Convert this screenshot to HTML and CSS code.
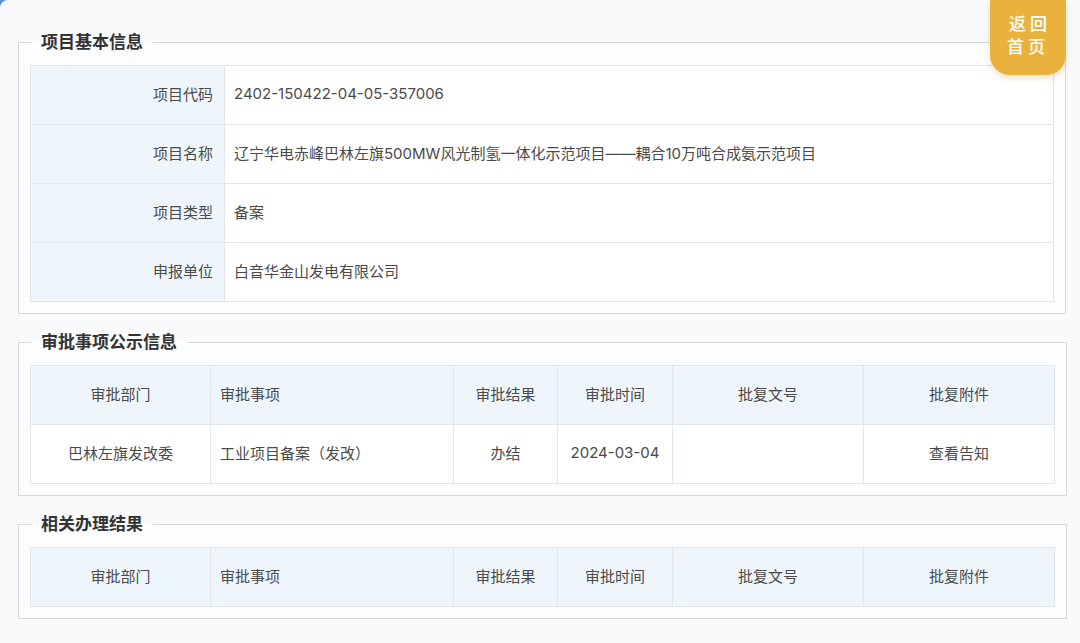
FILE: index.html
```html
<!DOCTYPE html>
<html lang="zh-CN">

<head>
    <meta charset="UTF-8" />
    <meta name="viewport" content="width=device-width, initial-scale=1.0" />
    <title>项目详情</title>
    <link rel="stylesheet" href="styles.css">
</head>

<body>
    <div class="page">

        <a class="back-home" href="#">返回<br>首页</a>

        <fieldset class="section">
            <legend>项目基本信息</legend>
            <table class="info-table">
                <tr>
                    <th>项目代码</th>
                    <td>2402-150422-04-05-357006</td>
                </tr>
                <tr>
                    <th>项目名称</th>
                    <td>辽宁华电赤峰巴林左旗500MW风光制氢一体化示范项目——耦合10万吨合成氨示范项目</td>
                </tr>
                <tr>
                    <th>项目类型</th>
                    <td>备案</td>
                </tr>
                <tr>
                    <th>申报单位</th>
                    <td>白音华金山发电有限公司</td>
                </tr>
            </table>
        </fieldset>

        <fieldset class="section">
            <legend>审批事项公示信息</legend>
            <table class="list-table">
                <colgroup>
                    <col class="c-dept"><col class="c-item"><col class="c-result">
                    <col class="c-time"><col class="c-doc"><col class="c-file">
                </colgroup>
                <tr>
                    <th>审批部门</th>
                    <th class="left">审批事项</th>
                    <th>审批结果</th>
                    <th>审批时间</th>
                    <th>批复文号</th>
                    <th>批复附件</th>
                </tr>
                <tr>
                    <td>巴林左旗发改委</td>
                    <td class="left">工业项目备案（发改）</td>
                    <td>办结</td>
                    <td>2024-03-04</td>
                    <td></td>
                    <td><a href="#">查看告知</a></td>
                </tr>
            </table>
        </fieldset>

        <fieldset class="section">
            <legend>相关办理结果</legend>
            <table class="list-table">
                <colgroup>
                    <col class="c-dept"><col class="c-item"><col class="c-result">
                    <col class="c-time"><col class="c-doc"><col class="c-file">
                </colgroup>
                <tr>
                    <th>审批部门</th>
                    <th class="left">审批事项</th>
                    <th>审批结果</th>
                    <th>审批时间</th>
                    <th>批复文号</th>
                    <th>批复附件</th>
                </tr>
            </table>
        </fieldset>

    </div>
</body>

</html>
```

FILE: styles.css
```css
html, body {
    margin: 0;
    height: 100%;
}

body {
    font-family: Inter, "Noto Sans CJK SC", sans-serif;
    background-color: #5b8fcf;
    color: #444;
}

.page {
    position: relative;
    min-height: 100%;
    box-sizing: border-box;
    padding: 30px 14px 20px 18px;
    background-color: #f8fafc;
    border-top-left-radius: 8px;
}

.back-home {
    position: absolute;
    top: 0;
    right: 14px;
    width: 76px;
    height: 75px;
    box-sizing: border-box;
    padding-top: 13px;
    text-align: center;
    font-size: 17px;
    line-height: 23px;
    font-weight: 500;
    letter-spacing: 4px;
    text-indent: 4px;
    color: #fff;
    text-decoration: none;
    background-color: #e9b23c;
    border-radius: 0 0 20px 20px;
    box-shadow: 0 3px 6px rgba(180, 130, 30, 0.25);
}

.section {
    margin: 0 0 16px 0;
    padding: 0 11px 11px 11px;
    border: 1px solid #d5d8dc;
    background-color: #fcfdfe;
}

.section legend {
    margin-left: 1px;
    padding: 0 10px;
    font-size: 17px;
    line-height: 24px;
    font-weight: bold;
    color: #333;
}

table {
    width: 100%;
    margin-top: 11px;
    border-collapse: collapse;
    table-layout: fixed;
    font-size: 15px;
    color: #4a4a4a;
}

th, td {
    height: 59px;
    padding: 0 0 4px 0;
    border: 1px solid #e2e6ea;
    font-weight: normal;
    box-sizing: border-box;
}

.info-table th {
    width: 194px;
    padding-right: 11px;
    text-align: right;
    background-color: #eef6fc;
}

.info-table td {
    padding-left: 9px;
    background-color: #fff;
}

.list-table th {
    text-align: center;
    background-color: #eef6fc;
}

.list-table td {
    text-align: center;
    background-color: #fff;
}

.list-table .left {
    text-align: left;
    padding-left: 9px;
}

.list-table a {
    color: #4a4a4a;
    text-decoration: none;
}

.c-dept { width: 180px; }
.c-item { width: 243px; }
.c-result { width: 104px; }
.c-time { width: 115px; }
.c-doc { width: 191px; }
.c-file { width: 191px; }
```
